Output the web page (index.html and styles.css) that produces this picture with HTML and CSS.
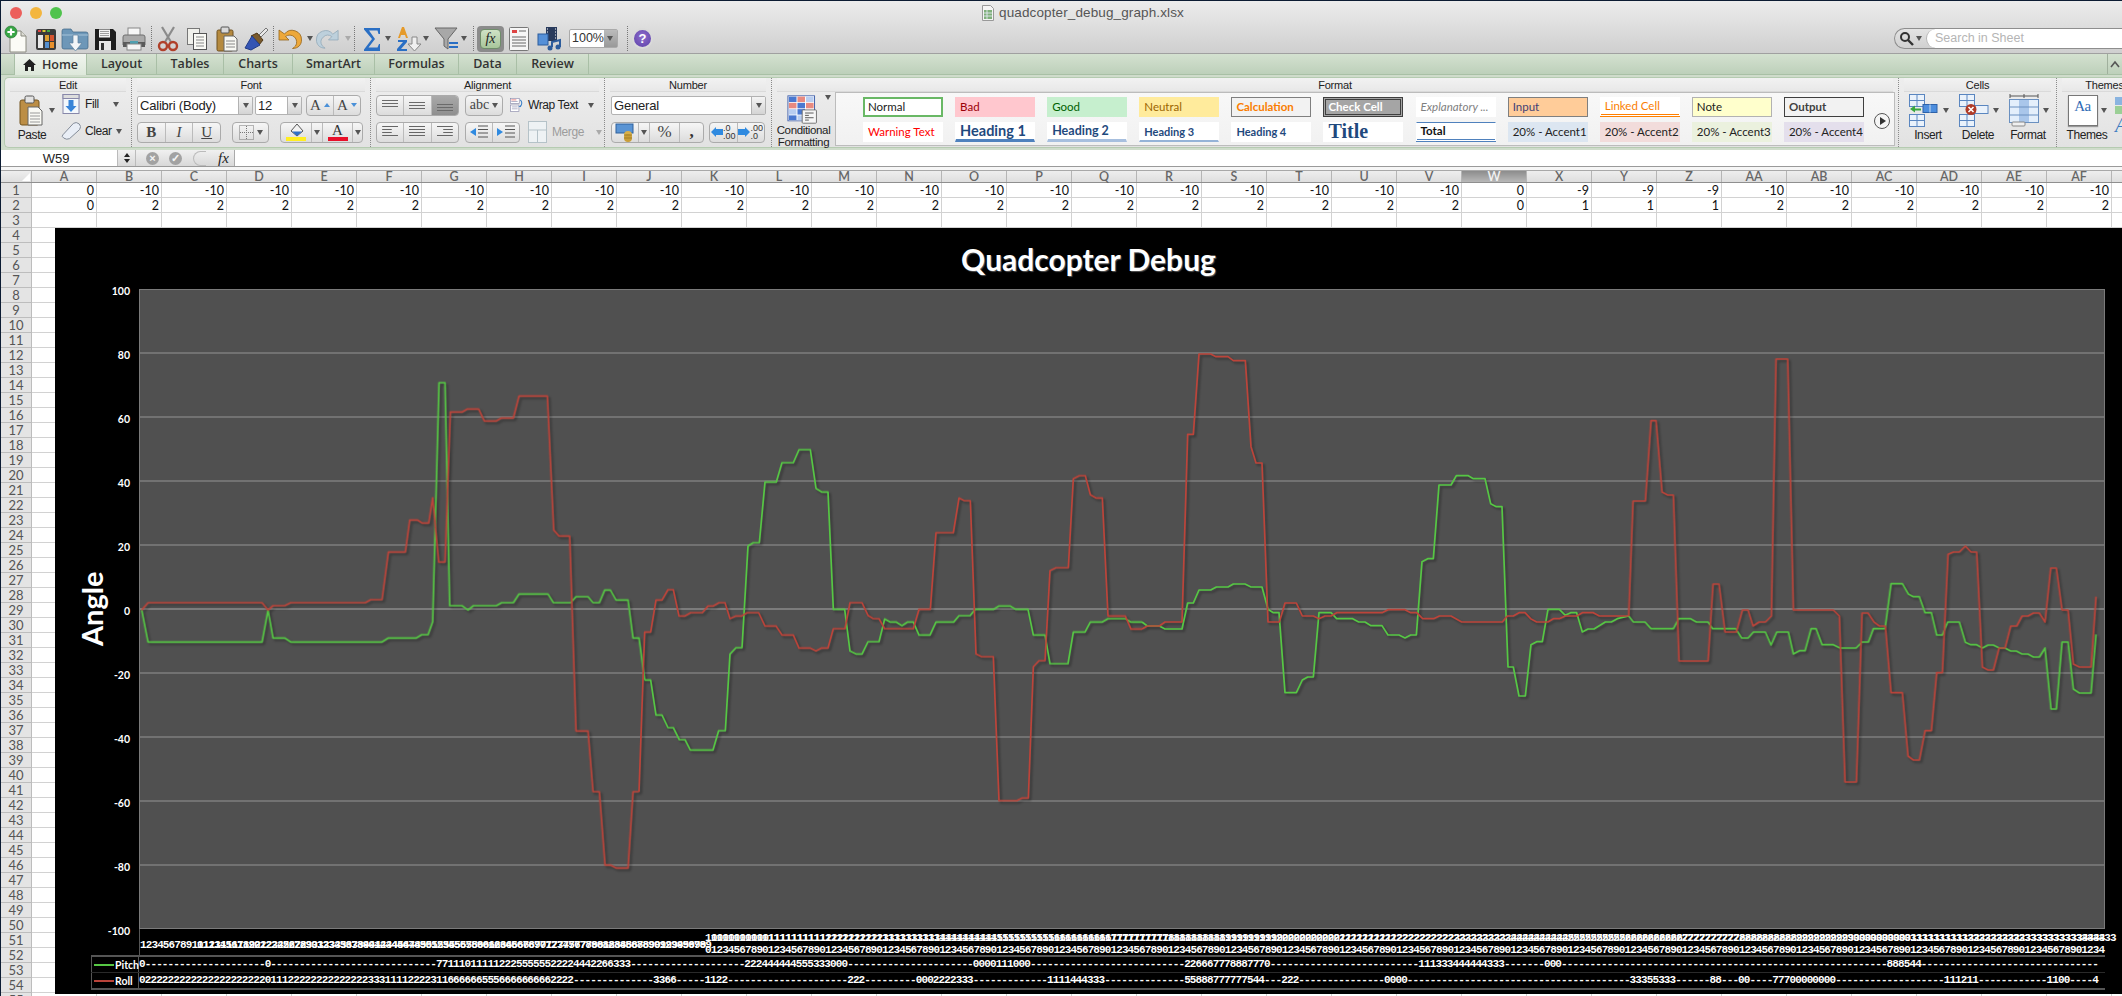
FILE: index.html
```html
<!DOCTYPE html>
<html lang="en">
<head>
<meta charset="utf-8">
<title>quadcopter_debug_graph.xlsx</title>
<link rel="stylesheet" href="styles.css">
</head>
<body>
<div class="app">
  <header class="titlebar">
    <div class="title-row">
      <div class="lights"><i class="light red"></i><i class="light yellow"></i><i class="light green"></i></div>
      <div class="doc-title">
        <svg width="12" height="16" viewBox="0 0 12 16"><path d="M.5.5h8l3 3v12H.5z" fill="#f4f4f4" stroke="#999"/><path d="M2 5h8v9H2z" fill="#7fb07a"/><path d="M2 8h8M2 11h8M5 5v9" stroke="#eef" stroke-width=".8"/></svg>
        <span>quadcopter_debug_graph.xlsx</span>
      </div>
    </div>
    <div class="tool-row">
      <div class="tool first"><svg width="26" height="28" viewBox="0 0 26 28"><path d="M6 6h11l5 5v16H6z" fill="#fbfbf6" stroke="#8a8a80"/><path d="M17 6v5h5" fill="#dcdcd4" stroke="#8a8a80"/><circle cx="7" cy="7" r="6" fill="#37a544" stroke="#1f6f2a" stroke-width=".6"/><path d="M7 3.400v7.200M3.400 7h7.200" stroke="#fff" stroke-width="2.200"/></svg></div>
      <div class="tool"><svg width="24" height="24" viewBox="0 0 24 24"><rect x="2" y="2" width="20" height="21" rx="2" fill="#3b3b3b"/><rect x="4" y="3" width="3" height="2" fill="#d44"/><rect x="8.500" y="3" width="3" height="2" fill="#dc3"/><rect x="13" y="3" width="3" height="2" fill="#4a4"/><rect x="4" y="8" width="5" height="13" fill="#e8e8e8"/><rect x="11" y="8" width="4" height="6" fill="#e0a030"/><rect x="16" y="8" width="4" height="6" fill="#d85530"/><rect x="11" y="15" width="4" height="6" fill="#5590d0"/><rect x="16" y="15" width="4" height="6" fill="#e8902c"/></svg></div>
      <div class="tool"><svg width="28" height="26" viewBox="0 0 28 26"><path d="M1 5q0-2 2-2h7l2 3h13q2 0 2 2v13q0 2-2 2H3q-2 0-2-2z" fill="#6d97b8" stroke="#3c6484" stroke-width=".7"/><path d="M1 9h26" stroke="#a6c3d9"/><path d="M12 9h5v8h4l-6.500 8L8 17h4z" fill="#f2f5f7" stroke="#5b7f9c" stroke-width=".7"/></svg></div>
      <div class="tool wide"><svg width="24" height="24" viewBox="0 0 24 24"><path d="M2 2h18l3 3v18H2z" fill="#1d1d1d"/><rect x="6" y="2.500" width="11" height="8" fill="#f3f3f3"/><path d="M7 4.500h9M7 6.500h9M7 8.500h9" stroke="#888" stroke-width=".8"/><rect x="6" y="14" width="12" height="9" fill="#e8e8e8"/><rect x="8" y="16" width="3" height="7" fill="#333"/></svg></div>
      <div class="tool"><svg width="26" height="24" viewBox="0 0 26 24"><rect x="7" y="1" width="12" height="8" fill="#f7f7f7" stroke="#888"/><path d="M2 10q0-2 2-2h18q2 0 2 2v8H2z" fill="#a9a9a9" stroke="#6f6f6f"/><rect x="2" y="15" width="22" height="5" fill="#5a5a5a"/><rect x="9" y="14" width="8" height="4" fill="#4f9fb0"/><rect x="6" y="17" width="14" height="6" fill="#f5f5f5" stroke="#888"/></svg></div>
      <i class="sep"></i>
      <div class="tool"><svg width="22" height="26" viewBox="0 0 22 26"><path d="M5 1l9 15M17 1L8 16" stroke="#8b8b8b" stroke-width="2.200"/><circle cx="6" cy="20" r="4" fill="none" stroke="#b0402a" stroke-width="2.400"/><circle cx="16" cy="20" r="4" fill="none" stroke="#b0402a" stroke-width="2.400"/></svg></div>
      <div class="tool"><svg width="22" height="24" viewBox="0 0 22 24"><rect x="1.500" y="1.500" width="12" height="16" fill="#f1f1ec" stroke="#777"/><rect x="7.500" y="6.500" width="13" height="16" fill="#fafaf5" stroke="#555"/><path d="M10 10h8M10 13h8M10 16h8M10 19h8" stroke="#888"/></svg></div>
      <div class="tool wide"><svg width="22" height="26" viewBox="0 0 22 26"><rect x="1" y="4" width="16" height="21" rx="1.500" fill="#b58a3f" stroke="#6e5020"/><rect x="5" y="1" width="8" height="6" rx="1" fill="#d9d9d9" stroke="#555"/><path d="M8 10h10l3 3v12H8z" fill="#f8f8f3" stroke="#666"/><path d="M10 15h9M10 18h9M10 21h9" stroke="#888"/></svg></div>
      <div class="tool"><svg width="26" height="26" viewBox="0 0 26 26"><path d="M16 9l7-7 2 2-7 7z" fill="#e8e8e8" stroke="#777"/><path d="M8 10l6-3 6 7-4 5z" fill="#7a5a2c" stroke="#4d3617"/><path d="M2 22l7-12 8 9-9 5z" fill="#3555b4" stroke="#223b86"/></svg></div>
      <i class="sep"></i>
      <div class="tool tool-d t-undo"><svg width="27" height="24" viewBox="0 0 27 24"><path d="M3 3v10h10L9.500 9.500a7 7 0 0 1 10 9.500q-1 1.200-3 2.500c6 0 9-4 9-8.500a9.500 9.500 0 0 0-17-6z" fill="#eda83a" stroke="#96651a" stroke-width=".8"/></svg><i class="car"></i></div>
      <div class="tool tool-d off"><svg width="27" height="24" viewBox="0 0 27 24"><path d="M24 3v10H14l3.500-3.500a7 7 0 0 0-10 9.500q1 1.200 3 2.500c-6 0-9-4-9-8.500a9.500 9.500 0 0 1 17-6z" fill="#bdd0dc" stroke="#90a8b8" stroke-width=".8"/></svg><i class="car"></i></div>
      <i class="sep"></i>
      <div class="tool tool-d t-sum"><svg width="18" height="24" viewBox="0 0 18 24"><path d="M1 1h16v6h-1.500l-1-3.500H6l6 8.500-6.500 8.500h9l1.500-3.500H17v7H1v-1.500L9 12 1 2.500z" fill="#2a6fc4"/></svg><i class="car"></i></div>
      <div class="tool tool-d t-tight"><svg width="26" height="26" viewBox="0 0 26 26"><path d="M2 12L6 1h2l4 11h-2l-1-3H5l-1 3z" fill="#e59a2a"/><path d="M2 14h9v2l-6 7h6v2H1v-2l6-7H2z" fill="#2a6fc4"/><path d="M16 11h5v7h4l-6.500 7L12 18h4z" fill="#f0f0f0" stroke="#888"/></svg><i class="car"></i></div>
      <div class="tool tool-d t-tight"><svg width="26" height="26" viewBox="0 0 26 26"><path d="M1 2h22L14 13v10l-4-3v-7z" fill="#a8a8a8" stroke="#666"/><path d="M15 17h9M15 21h9" stroke="#2a6fc4" stroke-width="2"/></svg><i class="car"></i></div>
      <i class="sep"></i>
      <div class="fx-btn"><span class="fx-inner">fx</span></div>
      <div class="tool narrow"><svg width="20" height="24" viewBox="0 0 20 24"><rect x=".5" y=".5" width="19" height="23" rx="1" fill="#f6f6f6" stroke="#777"/><path d="M3 3h5v3H3z" fill="#d44"/><path d="M10 4h7M3 10h14M3 13h14M3 16h14M3 19h14" stroke="#666"/></svg></div>
      <div class="tool t-media"><svg width="26" height="26" viewBox="0 0 26 26"><rect x="9" y="1" width="11" height="14" fill="#283a5c"/><path d="M10 3h1M10 6h1M10 9h1M10 12h1M18 3h1M18 6h1M18 9h1M18 12h1" stroke="#fff"/><rect x="1" y="8" width="10" height="11" fill="#5590d8" stroke="#2c5c9c"/><path d="M15 21V16l8-2v7" fill="none" stroke="#2c5c9c" stroke-width="2"/><circle cx="13" cy="22" r="2.500" fill="#2c5c9c"/><circle cx="21" cy="21" r="2.500" fill="#2c5c9c"/></svg></div>
      <div class="zoom-box"><span>100%</span><b class="zoom-step"><i class="car"></i></b></div>
      <i class="sep sep-zoom"></i>
      <div class="help"><span>?</span></div>
      <div class="search">
        <div class="search-cap"><svg width="16" height="16" viewBox="0 0 16 16"><circle cx="6" cy="6" r="4" fill="none" stroke="#333" stroke-width="2"/><path d="M9 9l5 5" stroke="#333" stroke-width="2.400"/></svg><i class="car"></i></div>
        <div class="search-field">Search in Sheet</div>
      </div>
    </div>
  </header>

  <nav class="tabs">
    <div class="tab active home"><svg width="13" height="12" viewBox="0 0 13 12"><path d="M6.500 0L13 6h-2v6H8V8H5v4H2V6H0z" fill="#222"/></svg>Home</div>
    <div class="tab t-layout">Layout</div>
    <div class="tab t-tables">Tables</div>
    <div class="tab t-charts">Charts</div>
    <div class="tab t-smart">SmartArt</div>
    <div class="tab t-form">Formulas</div>
    <div class="tab t-data">Data</div>
    <div class="tab t-rev">Review</div>
    <div class="tab-end"><svg width="10" height="8" viewBox="0 0 10 8"><path d="M1 7l4-5 4 5" fill="none" stroke="#555" stroke-width="1.600"/></svg></div>
  </nav>

  <section class="ribbon">
    <div class="ribbon-in">
      <div class="grp g-edit">
        <div class="grp-title">Edit</div>
        <div class="grp-body">
          <div class="big paste">
            <div class="big-ic"><svg width="24" height="31" viewBox="0 0 24 31"><rect x="1" y="5" width="19" height="25" rx="2" fill="#bc8e45" stroke="#74551f"/><rect x="6" y="1" width="9" height="7" rx="1.500" fill="#e3e3e3" stroke="#555"/><path d="M9 12h10l4 4v14H9z" fill="#f9f9f4" stroke="#666"/><path d="M11 18h10M11 21h10M11 24h10M11 27h10" stroke="#999"/></svg><i class="car"></i></div>
            <span>Paste</span>
          </div>
          <div class="stack">
            <div class="small"><svg width="17" height="20" viewBox="0 0 17 20"><rect x=".5" y=".5" width="16" height="19" fill="#f4f8fc" stroke="#88a"/><rect x=".5" y=".5" width="16" height="4" fill="#ddd" stroke="#88a"/><path d="M6 6h5v6h3l-5.500 6L3 12h3z" fill="#3a85d8"/></svg><span>Fill</span><i class="car"></i></div>
            <div class="small clear"><svg width="21" height="20" viewBox="0 0 21 20"><path d="M2 14L13 2q3-2 6 .5t.5 6L9 18q-3 1.500-6-.5t-1-3.500z" fill="#e9eef6" stroke="#7e8794"/></svg><span>Clear</span><i class="car"></i></div>
          </div>
        </div>
      </div>
      <div class="grp g-font">
        <div class="grp-title">Font</div>
        <div class="grp-body rows">
          <div class="rrow">
            <div class="combo font-name"><span>Calibri (Body)</span><b><i class="car"></i></b></div>
            <div class="combo font-size"><span>12</span><b><i class="car"></i></b></div>
            <div class="seg font-grow"><div class="sbtn grow"><span class="serif-a">A</span><i class="up"></i></div><div class="sbtn grow"><span class="serif-a">A</span><i class="down"></i></div></div>
          </div>
          <div class="rrow">
            <div class="seg biu"><div class="sbtn bold">B</div><div class="sbtn ital">I</div><div class="sbtn under">U</div></div>
            <div class="seg borders"><div class="sbtn bord"><svg width="15" height="15" viewBox="0 0 15 15"><rect x=".5" y=".5" width="14" height="14" fill="none" stroke="#777" stroke-dasharray="1 1"/><path d="M7.500 1v13M1 7.500h13" stroke="#777" stroke-dasharray="1 1"/></svg><i class="car"></i></div></div>
            <div class="seg colors">
              <div class="sbtn col-fill"><svg width="17" height="14" viewBox="0 0 17 14"><path d="M3 8l6-7 6 7-6 5z" fill="#f2f2f2" stroke="#555"/><path d="M4 8.500h10L9 13z" fill="#2f6fc8"/></svg><u class="yl"></u></div>
              <div class="sbtn col-c"><i class="car"></i></div>
              <div class="sbtn col-font"><span>A</span><u class="rd"></u></div>
              <div class="sbtn col-c"><i class="car"></i></div>
            </div>
          </div>
        </div>
      </div>
      <div class="grp g-align">
        <div class="grp-title">Alignment</div>
        <div class="grp-body rows">
          <div class="rrow">
            <div class="seg al3"><div class="sbtn"><i class="lines top"></i></div><div class="sbtn"><i class="lines"></i></div><div class="sbtn pressed"><i class="lines bot"></i></div></div>
            <div class="seg abc"><div class="sbtn"><span>abc</span><i class="car"></i></div></div>
            <div class="small wrap"><svg width="22" height="22" viewBox="0 0 22 22"><rect x=".5" y=".5" width="14" height="8" fill="#fff" stroke="#88a"/><path d="M2 3h8" stroke="#d44"/><path d="M2 5.500h10" stroke="#88a"/><rect x="1" y="11" width="13" height="10" fill="#fff" stroke="#88a"/><path d="M3 14h9M3 17h9" stroke="#88a"/><path d="M16 3q5 4 0 11" fill="none" stroke="#3a80c8" stroke-width="1.600"/><path d="M13 14h4v-3z" fill="#3a80c8"/></svg><span>Wrap Text</span><i class="car"></i></div>
          </div>
          <div class="rrow">
            <div class="seg al3"><div class="sbtn"><i class="hl l"></i></div><div class="sbtn"><i class="hl c"></i></div><div class="sbtn"><i class="hl r"></i></div></div>
            <div class="seg indent"><div class="sbtn"><svg width="20" height="14" viewBox="0 0 20 14"><path d="M9 1h10M9 4.500h10M9 8h10M9 12h10" stroke="#555"/><path d="M7 3v8L1 7z" fill="#2f8ae0"/></svg></div><div class="sbtn"><svg width="20" height="14" viewBox="0 0 20 14"><path d="M9 1h10M9 4.500h10M9 8h10M9 12h10" stroke="#555"/><path d="M1 3v8l6-4z" fill="#2f8ae0"/></svg></div></div>
            <div class="small merge"><svg width="20" height="22" viewBox="0 0 20 22"><rect x=".5" y=".5" width="18" height="21" fill="#eef2f4" stroke="#b5c2c8"/><path d="M.5 9h18M9.500 9v13" stroke="#b5c2c8"/></svg><span>Merge</span><i class="car"></i></div>
          </div>
        </div>
      </div>
      <div class="grp g-num">
        <div class="grp-title">Number</div>
        <div class="grp-body rows">
          <div class="rrow">
            <div class="combo num-fmt"><span>General</span><b><i class="car"></i></b></div>
          </div>
          <div class="rrow">
            <div class="seg num1"><div class="sbtn cur"><svg width="20" height="19" viewBox="0 0 20 19"><rect x="1" y="1" width="17" height="9" fill="#5a94d4" stroke="#2e609c"/><circle cx="13" cy="12" r="4" fill="#d8b04a"/><circle cx="13" cy="15" r="4" fill="#c99e38"/><path d="M9 12h8M9 15h8" stroke="#8a6b1c" stroke-width=".6"/></svg></div><div class="sbtn cur-c"><i class="car"></i></div><div class="sbtn pct">%</div><div class="sbtn cma">,</div></div>
            <div class="seg num2"><div class="sbtn dec"><svg width="12" height="12" viewBox="0 0 12 12"><path d="M12 3H5V1L0 6l5 5V9h7z" fill="#2f8ae0"/></svg><span class="dec-t">.0<br>.00</span></div><div class="sbtn dec"><svg width="12" height="12" viewBox="0 0 12 12"><path d="M0 3h7V1l5 5-5 5V9H0z" fill="#2f8ae0"/></svg><span class="dec-t">.00<br>.0</span></div></div>
          </div>
        </div>
      </div>
      <div class="grp g-format">
        <div class="grp-title">Format</div>
        <div class="grp-body">
          <div class="big cond">
            <div class="big-ic"><svg width="38" height="29" viewBox="0 0 40 37" preserveAspectRatio="none"><rect x="1" y="1" width="28" height="32" fill="#fff" stroke="#3c5ca8"/><rect x="2" y="2" width="8" height="7" fill="#4a78d0"/><rect x="11" y="2" width="8" height="7" fill="#e88a80"/><rect x="20" y="2" width="8" height="7" fill="#b8cdf0"/><rect x="2" y="10" width="8" height="7" fill="#e88a80"/><rect x="11" y="10" width="8" height="7" fill="#4a78d0"/><rect x="20" y="10" width="8" height="7" fill="#e88a80"/><rect x="2" y="18" width="8" height="7" fill="#b8cdf0"/><rect x="11" y="18" width="8" height="7" fill="#4a78d0"/><rect x="2" y="26" width="8" height="6" fill="#4a78d0"/><rect x="11" y="26" width="8" height="6" fill="#b8cdf0"/><rect x="16" y="19" width="15" height="17" rx="1" fill="#f6f6f6" stroke="#666"/><path d="M19 23h9M19 26h4M19 29h9M19 32h4" stroke="#444"/></svg><i class="car"></i></div>
            <span>Conditional<br>Formatting</span>
          </div>
          <div class="gallery">
            <div class="styles">
              <div class="st s-normal">Normal</div><div class="st s-bad">Bad</div><div class="st s-good">Good</div><div class="st s-neutral">Neutral</div><div class="st s-calc">Calculation</div><div class="st s-check">Check Cell</div><div class="st s-expl">Explanatory ...</div><div class="st s-input">Input</div><div class="st s-link">Linked Cell</div><div class="st s-note">Note</div><div class="st s-out">Output</div>
              <div class="st s-warn">Warning Text</div><div class="st s-h1">Heading 1</div><div class="st s-h2">Heading 2</div><div class="st s-h3">Heading 3</div><div class="st s-h4">Heading 4</div><div class="st s-title">Title</div><div class="st s-total">Total</div><div class="st s-a1">20% - Accent1</div><div class="st s-a2">20% - Accent2</div><div class="st s-a3">20% - Accent3</div><div class="st s-a4">20% - Accent4</div>
            </div>
            <div class="gal-next"><i></i></div>
          </div>
        </div>
      </div>
      <div class="grp g-cells">
        <div class="grp-title">Cells</div>
        <div class="grp-body">
          <div class="big cellbtn">
            <div class="big-ic"><svg width="30" height="33" viewBox="0 0 30 33"><rect x=".5" y=".5" width="15" height="12" fill="#eaf2fb" stroke="#5a86c0"/><path d="M8 .5v12M.5 6.500h15" stroke="#5a86c0"/><rect x=".5" y="20.500" width="15" height="12" fill="#eaf2fb" stroke="#5a86c0"/><path d="M8 20.500v12M.5 26.500h15" stroke="#5a86c0"/><rect x="14" y="10.500" width="14" height="8" fill="#4d8ede" stroke="#2e62a8"/><path d="M21 10.500v8" stroke="#cde"/><path d="M12 14.500H6v-3L1 15l5 3.500v-2h6z" fill="#3aa83f"/></svg><i class="car"></i></div>
            <span>Insert</span>
          </div>
          <div class="big cellbtn">
            <div class="big-ic"><svg width="30" height="33" viewBox="0 0 30 33"><rect x=".5" y=".5" width="15" height="12" fill="#eaf2fb" stroke="#5a86c0"/><path d="M8 .5v12M.5 6.500h15" stroke="#5a86c0"/><rect x=".5" y="20.500" width="15" height="12" fill="#eaf2fb" stroke="#5a86c0"/><path d="M8 20.500v12M.5 26.500h15" stroke="#5a86c0"/><rect x="16" y="11.500" width="13" height="8" fill="#eaf2fb" stroke="#5a86c0"/><circle cx="12" cy="15.500" r="5.500" fill="#b03a26"/><path d="M9.500 13l5 5M14.500 13l-5 5" stroke="#fff" stroke-width="1.600"/></svg><i class="car"></i></div>
            <span>Delete</span>
          </div>
          <div class="big cellbtn">
            <div class="big-ic"><svg width="30" height="33" viewBox="0 0 30 33"><path d="M1 2h28" stroke="#555"/><path d="M1 0v4M29 0v4M15 0v4" stroke="#555"/><rect x=".5" y="5.500" width="29" height="23" fill="#e4effb" stroke="#6a90c0"/><rect x="10" y="6" width="10" height="22" fill="#a9c6ea"/><path d="M.5 13h29M.5 21h29" stroke="#6a90c0"/><rect x="3" y="28" width="13" height="4" rx="1" fill="#f0f0f0" stroke="#888"/></svg><i class="car"></i></div>
            <span>Format</span>
          </div>
        </div>
      </div>
      <div class="grp g-themes">
        <div class="grp-title">Themes</div>
        <div class="grp-body">
          <div class="big themebtn">
            <div class="big-ic"><span class="aa">Aa</span><i class="car"></i></div>
            <span>Themes</span>
          </div>
          <div class="theme-side"><i class="b1"></i><i class="b2"></i><span>A</span></div>
        </div>
      </div>
    </div>
  </section>

  <section class="formula">
    <div class="namebox">W59</div>
    <div class="stepper"><i class="up"></i><i class="dn"></i></div>
    <div class="f-actions">
      <i class="roundx">×</i><i class="roundx chk">✓</i><i class="roundp"></i>
      <span class="fx-txt">fx</span>
    </div>
    <div class="f-input"></div>
  </section>

  <section class="sheet">
    <div class="colheads">
      <div class="corner"></div>
      <div class="ch">A</div><div class="ch">B</div><div class="ch">C</div><div class="ch">D</div><div class="ch">E</div><div class="ch">F</div><div class="ch">G</div><div class="ch">H</div><div class="ch">I</div><div class="ch">J</div><div class="ch">K</div><div class="ch">L</div><div class="ch">M</div><div class="ch">N</div><div class="ch">O</div><div class="ch">P</div><div class="ch">Q</div><div class="ch">R</div><div class="ch">S</div><div class="ch">T</div><div class="ch">U</div><div class="ch">V</div><div class="ch sel">W</div><div class="ch">X</div><div class="ch">Y</div><div class="ch">Z</div><div class="ch">AA</div><div class="ch">AB</div><div class="ch">AC</div><div class="ch">AD</div><div class="ch">AE</div><div class="ch">AF</div><div class="ch last"></div>
    </div>
    <div class="sheet-body">
      <div class="rowheads">
        <div>1</div><div>2</div><div>3</div><div>4</div><div>5</div><div>6</div><div>7</div><div>8</div><div>9</div><div>10</div><div>11</div><div>12</div><div>13</div><div>14</div><div>15</div><div>16</div><div>17</div><div>18</div><div>19</div><div>20</div><div>21</div><div>22</div><div>23</div><div>24</div><div>25</div><div>26</div><div>27</div><div>28</div><div>29</div><div>30</div><div>31</div><div>32</div><div>33</div><div>34</div><div>35</div><div>36</div><div>37</div><div>38</div><div>39</div><div>40</div><div>41</div><div>42</div><div>43</div><div>44</div><div>45</div><div>46</div><div>47</div><div>48</div><div>49</div><div>50</div><div>51</div><div>52</div><div>53</div><div>54</div><div>55</div>
      </div>
      <div class="cells">
        <div class="crow"><span>0</span><span>-10</span><span>-10</span><span>-10</span><span>-10</span><span>-10</span><span>-10</span><span>-10</span><span>-10</span><span>-10</span><span>-10</span><span>-10</span><span>-10</span><span>-10</span><span>-10</span><span>-10</span><span>-10</span><span>-10</span><span>-10</span><span>-10</span><span>-10</span><span>-10</span><span>0</span><span>-9</span><span>-9</span><span>-9</span><span>-10</span><span>-10</span><span>-10</span><span>-10</span><span>-10</span><span>-10</span></div>
        <div class="crow"><span>0</span><span>2</span><span>2</span><span>2</span><span>2</span><span>2</span><span>2</span><span>2</span><span>2</span><span>2</span><span>2</span><span>2</span><span>2</span><span>2</span><span>2</span><span>2</span><span>2</span><span>2</span><span>2</span><span>2</span><span>2</span><span>2</span><span>0</span><span>1</span><span>1</span><span>1</span><span>2</span><span>2</span><span>2</span><span>2</span><span>2</span><span>2</span></div>

        <div class="chart">
          <h1 class="chart-title">Quadcopter Debug</h1>
          <div class="chart-mid">
            <div class="y-title">Angle</div>
            <div class="y-axis"><span>100</span><span>80</span><span>60</span><span>40</span><span>20</span><span>0</span><span>-20</span><span>-40</span><span>-60</span><span>-80</span><span>-100</span></div>
            <svg class="plot" width="1966" height="640" viewBox="139 289 1966 640">
              <path class="grid" d="M139 353H2105M139 417H2105M139 481H2105M139 545H2105M139 673H2105M139 737H2105M139 801H2105M139 865H2105"/>
              <path class="grid zero" d="M139 609H2105"/>
              <g class="series">
                <g transform="translate(139 580) scale(.33333)">
                  <polyline class="pitch" points="8,90 27,186 369,186 387,90 402,174 437,174 455,186 729,186 748,174 832,174 848,164 867,164 881,125 900,-592 918,-592 932,77 969,77 987,90 1003,77 1072,77 1088,68 1123,68 1140,42 1227,42 1243,68 1295,68 1311,50 1347,50 1362,68 1381,68 1397,30 1414,30 1431,60 1467,60 1482,174 1500,174 1517,300"/>
                  <polyline class="roll" points="8,90 27,68 369,68 387,90 402,77 437,77 455,68 679,68 695,59 729,59 748,-84 799,-84 812,-180 835,-180 849,-171 869,-171 881,-247 899,-54 918,-54 934,-504 970,-504 985,-513 1019,-513 1036,-477 1072,-477 1087,-486 1123,-486 1140,-552 1225,-552 1244,-150 1260,-132 1292,-132 1311,453 1347,453 1362,635 1381,635 1398,855 1414,855 1431,864 1467,864 1482,635 1500,635"/>
                </g>
                <g transform="translate(640 340) scale(.33333)">
                  <polyline class="pitch" points="14,1020 32,1020 48,1125 66,1125 84,1163 100,1163 118,1199 135,1199 151,1230 219,1230 236,1172 256,1172 270,942 288,923 306,923 324,618 340,608 358,608 375,426 409,426 426,368 460,368 477,329 511,329 528,445 545,456 564,456 580,808 614,808 630,933 648,942 666,942 684,905 717,905 734,837 750,846 768,846 786,857 803,846 820,846 837,885 870,885 888,846 941,846 957,827 990,827 1006,808 1060,808 1077,798 1110,798 1128,808 1164,808 1180,885 1215,885 1230,971 1284,971 1300,876 1335,876 1351,846 1387,846 1404,836 1456,836 1472,846 1506,846"/>
                  <polyline class="roll" points="-3,1355 14,876 32,876 48,780 66,780 84,749 100,749 117,828 135,828 152,818 187,818 204,798 220,798 237,788 255,788 270,836 288,828 305,828 322,818 356,818 375,858 408,858 426,885 460,885 477,924 510,924 528,933 545,924 564,924 580,866 615,866 630,788 666,788 684,826 700,836 717,836 734,866 820,866 837,808 871,808 888,578 940,578 957,474 973,482 991,482 1008,942 1025,950 1060,950 1077,1382 1130,1382 1147,1374 1165,1374 1180,980 1197,962 1215,962 1230,692 1248,683 1285,683 1300,416 1318,407 1336,407 1351,464 1368,474 1387,474 1404,828 1456,828 1473,867 1506,867"/>
                </g>
                <g transform="translate(1140 340) scale(.33333)">
                  <polyline class="pitch" points="6,846 22,858 58,858 75,867 126,867 143,789 160,789 177,750 212,750 229,741 264,741 280,732 315,732 333,741 366,741 384,808 400,818 417,818 435,1058 469,1058 487,1020 503,1011 520,1011 537,818 573,818 590,836 638,836 656,846 675,846 693,857 726,857 744,885 777,885 795,894 812,885 829,885 846,665 863,656 880,656 897,435 933,435 949,407 985,407 1000,416 1035,416 1052,491 1069,500 1086,500 1104,981 1120,981 1137,1068 1156,1068 1173,914 1190,905 1207,905 1224,808 1258,808 1276,826 1292,818 1310,818 1327,876 1344,867 1362,867 1396,846 1414,846 1432,836 1466,828"/>
                  <polyline class="roll" points="6,867 22,858 58,858 75,846 126,846 143,283 160,283 177,42 212,42 228,50 264,50 280,62 316,62 333,320 348,369 366,369 384,846 418,846 435,789 469,789 487,828 520,828 537,836 555,828 573,828 590,818 726,818 744,809 795,809 812,818 830,818 848,836 881,836 898,828 933,828 965,846 1087,846 1102,828 1120,828 1137,818 1155,818 1172,836 1190,846 1224,846 1240,836 1258,836 1276,828 1310,828 1327,818 1360,818 1378,828 1466,828"/>
                </g>
                <g transform="translate(1620 380) scale(.33333)">
                  <polyline class="pitch" points="26,708 40,726 75,726 93,746 160,746 176,716 212,716 229,726 264,726 278,746 347,746 365,774 384,774 400,756 436,756 453,795 470,756 505,756 520,822 538,812 555,812 573,746 588,746 606,794 640,794 660,804 708,804 726,786 745,786 760,746 795,746 813,611 847,611 865,642 880,650 898,650 915,698 934,698 950,765 967,765 983,726 1018,726 1036,787 1052,794 1070,794 1087,804 1104,795 1120,795 1138,804 1155,804 1172,813 1189,813 1206,822 1224,822 1240,831 1258,831 1275,804 1293,987 1309,987 1326,786 1344,786 1360,927 1378,939 1413,939 1428,763"/>
                  <polyline class="roll" points="26,708 39,363 76,363 93,122 108,122 126,336 143,345 160,345 177,843 264,843 279,612 297,612 315,756 349,756 367,690 384,690 399,738 417,726 436,726 454,708 468,-63 503,-63 520,690 640,690 658,708 675,1206 709,1206 726,699 744,699 762,726 778,738 796,738 813,938 847,938 864,1128 880,1140 898,1140 915,1052 934,1052 950,878 967,878 984,523 1000,516 1018,516 1036,498 1053,516 1070,516 1087,861 1104,870 1120,870 1137,804 1155,804 1172,738 1190,738 1206,708 1224,708 1240,699 1258,699 1275,726 1292,564 1309,564 1326,690 1344,690 1360,852 1378,861 1413,861 1428,650"/>
                </g>
              </g>
            </svg>
          </div>
          <div class="dt">
            <div class="dt-cats">
              <div class="cat-a digits">
                <span>123456789111111111122222222223333333333444444444455555555556666666666777777777788888888889999999999</span>
                <span class="ones-a">012345678901234567890123456789012345678901234567890123456789012345678901234567890123456789</span>
              </div>
              <div class="cat-b digits">
                <div class="cat-top">
                  <span>1111111111111111111111111111111111111111111111111111111111111111111111111111111111111111111111111111222222222222222222222222222222222222222222222222222222222222222222222222222222222222222222222222222233333333333333333333333333333333333333333333333</span>
                  <span class="tens-b">0000000000111111111122222222223333333333444444444455555555556666666666777777777788888888889999999999000000000011111111112222222222333333333344444444445555555555666666666677777777778888888888999999999900000000001111111111222222222233333333334444</span>
                </div>
                <span class="cat-ones">01234567890123456789012345678901234567890123456789012345678901234567890123456789012345678901234567890123456789012345678901234567890123456789012345678901234567890123456789012345678901234567890123456789012345678901234567890123456789012345678901234</span>
              </div>
            </div>
            <div class="dt-row r-first">
              <div class="key"><i class="k-pitch"></i><span>Pitch</span></div>
              <div class="vals digits">0---------------------0-----------------------------7711101111122255555522224442266333--------------------222444444555333000----------------------0000111000---------------------------226667778887770--------------------------111333444444333-------000---------------------------------------------------------888544-------------------------------</div>
            </div>
            <div class="dt-row">
              <div class="key"><i class="k-roll"></i><span>Roll</span></div>
              <div class="vals digits">0222222222222222222222011122222222222222333111122223116666665556666666662222--------------3366-----1122---------------------222---------0002222333-------------1111444333--------------55888777777544---222---------------0000---------------------------------------33355333------88---00----77700000000-------------------111211------------1100----4</div>
            </div>
          </div>
        </div>
      </div>
    </div>
  </section>
</div>
</body>
</html>
```
FILE: styles.css
```css
* { box-sizing: border-box; }
html, body { margin: 0; height: 996px; overflow: hidden; background: #0c1c33; }
body { font-family: "Lato", "Liberation Sans", sans-serif; color: #222; }
i { display: block; font-style: normal; }
.app { margin: 1px 0 0 1px; width: 2121px; height: 995px; background: #fff; overflow: hidden; display: flex; flex-direction: column; }

.car { width: 0; height: 0; border-left: 3px solid transparent; border-right: 3px solid transparent; border-top: 5px solid #555; flex: none; }

/* title bar + toolbar */
.titlebar { height: 53px; flex: none; background: linear-gradient(#ececec, #cfcfcf); border-bottom: 1px solid #a0a0a0; }
.title-row { height: 23px; display: flex; align-items: center; }
.lights { display: flex; gap: 8px; margin-left: 9px; width: 972px; }
.light { width: 12px; height: 12px; border-radius: 50%; }
.light.red { background: #ec5f5b; }
.light.yellow { background: #f3b63f; }
.light.green { background: #4fc34c; }
.doc-title { display: flex; align-items: center; gap: 5px; font: 13.5px "Liberation Sans", sans-serif; color: #555; letter-spacing: .12px; }
.tool-row { height: 29px; display: flex; align-items: center; }
.tool { width: 29px; height: 29px; display: flex; align-items: center; justify-content: center; flex: none; }
.tool.first { margin-left: 1px; }
.tool.wide { margin-left: 1px; }
.tool.narrow { width: 26px; margin-left: 2px; }
.t-media { margin-left: 3px; }
.tool-d { width: 38px; justify-content: flex-start; gap: 4px; padding-left: 2px; }
.t-undo { width: 39px; padding-left: 1px; }
.tool-d.off { width: 37px; padding-left: 1px; }
.tool-d.off .car { border-top-color: #aaa; }
.t-sum { padding-left: 7px; }
.t-tight { gap: 1px; }
.sep { width: 1px; height: 25px; border-left: 1px dotted #777; margin: 0 1px 0 3px; flex: none; }
.sep-zoom { margin-left: 9px; }
.fx-btn { width: 27px; height: 26px; margin-left: 2px; background: #8b8b8b; border-radius: 4px; padding: 3px; flex: none; }
.fx-inner { display: block; height: 20px; background: linear-gradient(#cfe2c6, #a8c69b); border: 1px solid #6f8d6a; border-radius: 4px; font: italic 14px/17px "Liberation Serif", serif; color: #222; text-align: center; }
.zoom-box { width: 49px; height: 19px; margin-left: 5px; display: flex; background: #fff; border: 1px solid #aaa; border-radius: 2px; font: 12.5px/17px "Liberation Sans", sans-serif; color: #333; padding-left: 2px; flex: none; }
.zoom-box span { flex: 1; }
.zoom-step { width: 14px; background: linear-gradient(#bbb, #999); display: flex; align-items: center; justify-content: center; }
.help { width: 21px; height: 21px; margin-left: 3px; border-radius: 50%; background: radial-gradient(circle at 50% 40%, #8f6ecc, #5b3fa8); border: 2px solid #dadada; color: #fff; font: bold 13px/17px "Liberation Sans", sans-serif; text-align: center; flex: none; }
.search { margin-left: auto; width: 228px; height: 21px; display: flex; border: 1px solid #8e8e8e; border-right: 0; border-radius: 11px 0 0 11px; background: linear-gradient(#e4e4e4, #d0d0d0); flex: none; }
.search-cap { width: 31px; display: flex; align-items: center; gap: 1px; padding-left: 4px; flex: none; }
.search-field { flex: 1; background: #fff; border-radius: 10px 0 0 10px; border-left: 1px solid #b5b5b5; padding-left: 8px; font: 12.5px/19px "Liberation Sans", sans-serif; color: #b5b5b5; }

/* tabs */
.tabs { height: 21px; flex: none; display: flex; padding-left: 13px; background: linear-gradient(#d4e1d0, #bdd0ba); border-bottom: 1px solid #a8c0a5; font: 600 12.5px/20px "Open Sans", sans-serif; color: #333; }
.tab { text-align: center; border-right: 1px solid #a9bfa6; flex: none; }
.tab.home { width: 73px; display: flex; align-items: center; justify-content: center; gap: 6px; }
.tab.active { background: linear-gradient(#f1f5ef, #dde8da); height: 21px; border-left: 1px solid #a9bfa6; }
.t-layout { width: 70px; }
.t-tables { width: 67px; }
.t-charts { width: 69px; }
.t-smart { width: 82px; }
.t-form { width: 84px; }
.t-data { width: 58px; }
.t-rev { width: 72px; }
.tab-end { margin-left: auto; width: 15px; border-left: 1px solid #a0b09d; display: flex; align-items: center; justify-content: center; }

/* ribbon */
.ribbon { height: 75px; flex: none; background: #cfdccb; padding: 2px 0 2px 3px; overflow: hidden; }
.ribbon-in { height: 71px; display: flex; background: linear-gradient(#eeeeee, #e2e2e2); border: 1px solid #b5cbb1; border-right: 0; border-radius: 5px 0 0 5px; }
.grp { flex: none; height: 69px; border-left: 1px dotted #8a8a8a; display: flex; flex-direction: column; }
.g-edit { width: 126px; border-left: 0; }
.g-font { width: 239px; }
.g-align { width: 234px; }
.g-num { width: 167px; }
.g-format { width: 1127px; }
.g-cells { width: 158px; }
.g-themes { width: 96px; }
.grp-title { height: 14px; margin: 0 5px; text-align: center; font: 11px/14px "Liberation Sans", sans-serif; letter-spacing: -.2px; color: #222; border-bottom: 1px solid #dadada; background: linear-gradient(#f2f2f2, #e8e8e8); }
.grp-body { flex: 1; display: flex; position: relative; }
.rows { flex-direction: column; padding: 3px 0 0 5px; gap: 7px; }
.rrow { display: flex; height: 20px; align-items: center; gap: 4px; }

.big { display: flex; flex-direction: column; align-items: center; font: 12px/13px "Liberation Sans", sans-serif; letter-spacing: -.4px; text-align: center; flex: none; }
.big-ic { display: flex; align-items: center; gap: 3px; height: 37px; }
.paste { width: 36px; margin-left: 9px; }
.paste .big-ic { margin-left: 10px; gap: 6px; }
.stack { margin-left: 11px; width: 60px; display: flex; flex-direction: column; gap: 7px; padding-top: 2px; }
.small { display: flex; align-items: center; gap: 4px; font: 12px "Liberation Sans", sans-serif; letter-spacing: -.4px; flex: none; white-space: nowrap; }
.small .car { margin-left: auto; }
.stack .small { height: 20px; width: 58px; }
.stack .small svg { flex: none; width: 20px; }

.combo { display: flex; height: 19px; background: #fff; border: 1px solid #b2b2b2; border-radius: 2px; font: 13px/17px "Liberation Sans", sans-serif; letter-spacing: -.2px; }
.combo span { flex: 1; padding-left: 2px; }
.combo b { width: 14px; background: linear-gradient(#f4f4f4, #d4d4d4); border-left: 1px solid #b2b2b2; display: flex; align-items: center; justify-content: center; }
.font-name { width: 116px; }
.font-size { width: 47px; margin-left: -2px; }
.font-grow { width: 55px; height: 20px; }

.seg { display: flex; border: 1px solid #ababab; border-radius: 4px; background: linear-gradient(#f6f6f6, #dcdcdc); height: 21px; flex: none; }
.sbtn { flex: 1; display: flex; align-items: center; justify-content: center; border-left: 1px solid #bbb; gap: 3px; position: relative; min-width: 0; }
.sbtn:first-child { border-left: 0; border-radius: 3px 0 0 3px; }
.sbtn:last-child { border-radius: 0 3px 3px 0; }
.pressed { background: linear-gradient(#a9a9a9, #8f8f8f); }
.serif-a { font: 15px "Liberation Serif", serif; color: #444; }
.up { width: 0; height: 0; border: 3px solid transparent; border-bottom: 4px solid #4a90d8; border-top: 0; }
.down { width: 0; height: 0; border: 3px solid transparent; border-top: 4px solid #4a90d8; border-bottom: 0; }
.biu { width: 84px; margin-right: 7px; font: 15px "Liberation Serif", serif; color: #444; }
.bold { font-weight: bold; }
.ital { font-style: italic; }
.under { text-decoration: underline; }
.borders { width: 37px; margin-right: 7px; }
.colors { width: 83px; }
.col-fill, .col-font { flex: none; width: 30px; flex-direction: column; gap: 0; font: 15px/14px "Liberation Serif", serif; color: #333; }
.col-c { flex: none; width: 11px; }
.yl, .rd { display: block; width: 20px; height: 4px; text-decoration: none; }
.yl { background: #ffee22; }
.rd { background: #e8102a; }

.al3 { width: 83px; }
.lines { width: 16px; height: 11px; background: repeating-linear-gradient(#6a6a6a 0 1px, transparent 1px 3px); background-size: 100% 7px; background-repeat: no-repeat; background-position: center; }
.lines.top { background-position: top; }
.lines.bot { background-position: bottom; }
.hl { width: 16px; height: 12px; background: repeating-linear-gradient(#666 0 1px, transparent 1px 3px); }
.hl.l { clip-path: polygon(0 0, 100% 0, 100% 17%, 60% 17%, 60% 34%, 100% 34%, 100% 50%, 60% 50%, 60% 67%, 100% 67%, 100% 84%, 60% 84%, 60% 100%, 0 100%); }
.hl.r { clip-path: polygon(0 0, 100% 0, 100% 100%, 40% 100%, 40% 84%, 0 84%, 0 67%, 40% 67%, 40% 50%, 0 50%, 0 34%, 40% 34%, 40% 17%, 0 17%); }
.abc { width: 38px; margin-left: 2px; font: 14px "Liberation Serif", serif; color: #444; }
.wrap { margin-left: 3px; width: 84px; }
.wrap .car { margin-left: 6px; }
.indent { width: 55px; margin-left: 2px; }
.merge { margin-left: 4px; color: #9c9c9c; gap: 4px; }
.merge .car { border-top-color: #aaa; margin-left: 8px; }

.num-fmt { width: 155px; margin-left: 1px; }
.num1 { width: 93px; margin-left: 1px; }
.cur { flex: none; width: 26px; }
.cur-c { flex: none; width: 11px; }
.pct { font: 17px "Liberation Serif", serif; color: #444; flex: none; width: 30px; }
.cma { font: bold 17px/14px "Liberation Serif", serif; color: #333; flex: 1; }
.num2 { width: 56px; margin-left: 1px; }
.dec { gap: 0; }
.dec-t { font: 9px/8px "Liberation Sans", sans-serif; color: #333; }

.cond { width: 63px; line-height: 12px; font-size: 11.5px; letter-spacing: -.35px; }
.cond .big-ic { height: 32px; margin-left: 10px; align-items: flex-start; padding-top: 3px; gap: 0; }
.gallery { width: 1060px; height: 54px; background: linear-gradient(#f8f8f8, #f1f1f1); border: 1px solid #bcbcbc; position: relative; padding: 4px 0 0 27px; flex: none; }
.styles { display: grid; grid-template-columns: repeat(11, 80px); grid-auto-rows: 20px; column-gap: 12.100px; row-gap: 5px; }
.st { font-size: 11.5px; line-height: 18px; padding-left: 4px; overflow: hidden; white-space: nowrap; background: #fff; border: 1px solid transparent; }
.s-normal { border: 2px solid #69b865; line-height: 16px; padding-left: 3px; }
.s-bad { background: #ffc7ce; color: #9c0006; }
.s-good { background: #c6efce; color: #006100; }
.s-neutral { background: #ffeb9c; color: #9c6500; }
.s-calc { background: #f2f2f2; border-color: #7f7f7f; color: #fa7d00; font-weight: bold; }
.s-check { background: #a5a5a5; border: 3px double #3f3f3f; color: #fff; font-weight: bold; line-height: 14px; padding-left: 2px; }
.s-expl { color: #7f7f7f; font-style: italic; }
.s-input { background: #ffcc99; border-color: #7f7f7f; color: #3f3f76; }
.s-link { color: #fa7d00; border-bottom: 3px double #ff8001; line-height: 16px; }
.s-note { background: #ffffcc; border-color: #b2b2b2; }
.s-out { background: #f2f2f2; border-color: #3f3f3f; color: #3f3f3f; font-weight: bold; }
.s-warn { color: #ff0000; }
.s-h1 { color: #1f497d; font-size: 14.500px; font-weight: bold; border-bottom: 3px solid #4f81bd; line-height: 16px; }
.s-h2 { color: #1f497d; font-size: 12.500px; font-weight: bold; border-bottom: 3px solid #a7bfde; line-height: 16px; }
.s-h3 { color: #1f497d; font-size: 11px; font-weight: bold; border-bottom: 2px solid #95b3d7; line-height: 17px; }
.s-h4 { color: #1f497d; font-size: 11px; font-weight: bold; }
.s-title { color: #1f497d; font: bold 20px/17px "Liberation Serif", serif; }
.s-total { font-weight: bold; color: #111; border-top: 1px solid #4f81bd; border-bottom: 3px double #4f81bd; line-height: 15px; }
.s-a1 { background: #dce6f1; }
.s-a2 { background: #f2dcdb; }
.s-a3 { background: #ebf1de; }
.s-a4 { background: #e4dfec; }
.gal-next { position: absolute; right: 4px; top: 20px; width: 16px; height: 16px; border-radius: 50%; border: 1px solid #555; background: #f5f5f5; display: flex; align-items: center; justify-content: center; }
.gal-next i { width: 0; height: 0; border-left: 6px solid #333; border-top: 4px solid transparent; border-bottom: 4px solid transparent; margin-left: 2px; }

.cellbtn { width: 50px; }
.cellbtn .big-ic { gap: 4px; margin-left: 2px; }
.cellbtn:first-child { margin-left: 4px; }
.g-themes .themebtn { width: 50px; margin-left: 5px; }
.aa { width: 30px; height: 31px; display: block; background: #fff; border: 1px solid #777; font: 15px/20px "Liberation Serif", serif; color: #2f6bb5; box-shadow: 0 1px 1px #999; }
.theme-side { display: flex; flex-direction: column; gap: 1px; margin-left: 3px; padding-top: 5px; font: italic 20px/20px "Liberation Serif", serif; color: #3a7ac0; }
.theme-side .b1 { height: 8px; background: #8ab4e0; }
.theme-side .b2 { height: 8px; background: #9bcf96; }

/* formula bar */
.formula { height: 17px; flex: none; display: flex; background: #fff; border-bottom: 1px solid #9a9a9a; }
.namebox { width: 116px; text-align: center; font: 13px/17px "Liberation Sans", sans-serif; padding-right: 6px; }
.stepper { width: 18px; background: linear-gradient(#f0f0f0, #d8d8d8); border-left: 1px solid #bbb; display: flex; flex-direction: column; align-items: center; justify-content: center; gap: 2px; }
.stepper .up { border-bottom-color: #222; }
.stepper .dn { width: 0; height: 0; border: 3px solid transparent; border-top: 4px solid #222; border-bottom: 0; }
.f-actions { width: 100px; background: linear-gradient(#f0f0f0, #d8d8d8); border-left: 1px solid #bbb; border-right: 1px solid #aaa; display: flex; align-items: center; gap: 10px; padding-left: 10px; }
.roundx { width: 13px; height: 13px; border-radius: 50%; background: #a2a2a2; color: #f4f4f4; font: bold 11px/13px "Liberation Sans", sans-serif; text-align: center; }
.roundp { width: 13px; height: 15px; border: 1px solid #bbb; border-right: 0; border-radius: 8px 0 0 8px; margin-left: 1px; }
.fx-txt { font: italic 15px/15px "Liberation Serif", serif; margin-left: 2px; color: #222; }
.f-input { flex: 1; background: #fff; }

/* sheet */
.sheet { flex: 1; min-height: 0; display: flex; flex-direction: column; padding-top: 3px; background: #f6f6f6; }
.colheads { height: 13px; display: flex; flex: none; background: linear-gradient(#eeeeee, #dedede); border-top: 1px solid #a8a8a8; border-bottom: 1px solid #8f8f8f; }
.corner { width: 30px; flex: none; position: relative; }
.corner::after { content: ""; position: absolute; right: 1px; bottom: 1px; border-left: 8px solid transparent; border-bottom: 8px solid #fff; }
.ch { width: 65px; flex: none; text-align: center; font: 600 12.500px/11px "Lato", sans-serif; color: #666; border-left: 1px solid #b5b5b5; }
.ch.sel { background: linear-gradient(#8c8c8c, #b8b8b8); color: #f2f2f2; }
.ch.last { flex: 1; }
.sheet-body { flex: 1; display: flex; min-height: 0; }
.rowheads { width: 30px; flex: none; background: #e4e4e4; }
.rowheads div { height: 15px; text-align: center; font: 13px/14px "Lato", sans-serif; color: #555; border-bottom: 1px solid #bdbdbd; }
.cells { flex: 1; position: relative; background-color: #fff; background-image: linear-gradient(to right, #d2d2d2 1px, transparent 1px), linear-gradient(to bottom, #d2d2d2 1px, transparent 1px); background-size: 65px 15px; background-position: -1px -1px; border-left: 1px solid #bdbdbd; }
.crow { display: grid; grid-template-columns: repeat(32, 65px); height: 15px; }
.crow span { text-align: right; padding-right: 3px; font: 12.500px/15px "Lato", sans-serif; color: #111; }

/* chart */
.chart { position: absolute; left: 23px; top: 45px; right: 0; height: 766px; background: #000; color: #fff; }
.chart-title { margin: 0; height: 61px; font: bold 30px/62px "Lato", sans-serif; text-align: center; text-shadow: 1px 1px 1px #555; }
.chart-mid { display: flex; height: 640px; }
.y-title { width: 50px; margin-left: 19px; align-self: center; writing-mode: vertical-rl; transform: rotate(180deg); font: bold 29px/36px "Lato", sans-serif; text-align: center; height: 76px; flex: none; }
.y-axis { width: 6px; height: 652px; margin-top: -4px; display: flex; flex-direction: column; justify-content: space-between; align-items: flex-end; font: bold 10.500px/12px "Lato", sans-serif; flex: none; }
.y-axis span { white-space: nowrap; }
.plot { background: #505050; margin-left: 9px; flex: none; outline: 1px solid #7a7a7a; outline-offset: -1px; }
.grid { stroke: #7e7e7e; stroke-width: 1.500; fill: none; }
.zero { stroke: #a8a8a8; stroke-width: 1; }
.series { filter: drop-shadow(2px 2px 1px rgba(0, 0, 0, .35)); }
.series polyline { fill: none; vector-effect: non-scaling-stroke; stroke-width: 1.700; stroke-linejoin: round; }
.pitch { stroke: #56c744; }
.roll { stroke: #bc443a; }

/* data table */
.dt { padding-left: 36px; }
.digits { font: bold 11px/12px "Liberation Mono", monospace; letter-spacing: -.89px; white-space: nowrap; }
.dt-cats { margin-left: 48px; height: 26px; display: flex; border-left: 1px solid #555; }
.cat-a { width: 565px; display: grid; align-items: center; padding-top: 5px; flex: none; }
.cat-a span { grid-area: 1 / 1; }
.ones-a { padding-left: 57px; }
.cat-b { display: flex; flex-direction: column; padding-top: 3px; }
.cat-top { display: grid; }
.cat-top span { grid-area: 1 / 1; }
.tens-b { padding-left: 6px; }
.dt-row { display: flex; height: 17px; width: 2014px; border-top: 2px solid #444; }
.dt-row.r-first { border-top: 2px solid #555; }
.dt-row:last-child { height: 18px; border-bottom: 2px solid #555; border-top: 1px solid #2a2a2a; }
.key { width: 48px; flex: none; display: flex; align-items: center; gap: 1px; font: bold 10.500px/12px "Lato", sans-serif; border-left: 1px solid #555; border-right: 1px solid #555; padding-left: 2px; }
.key i { width: 20px; height: 2px; flex: none; }
.k-pitch { background: #56c744; }
.k-roll { background: #b8433a; }
.vals { flex: 1; line-height: 15px; }
```
